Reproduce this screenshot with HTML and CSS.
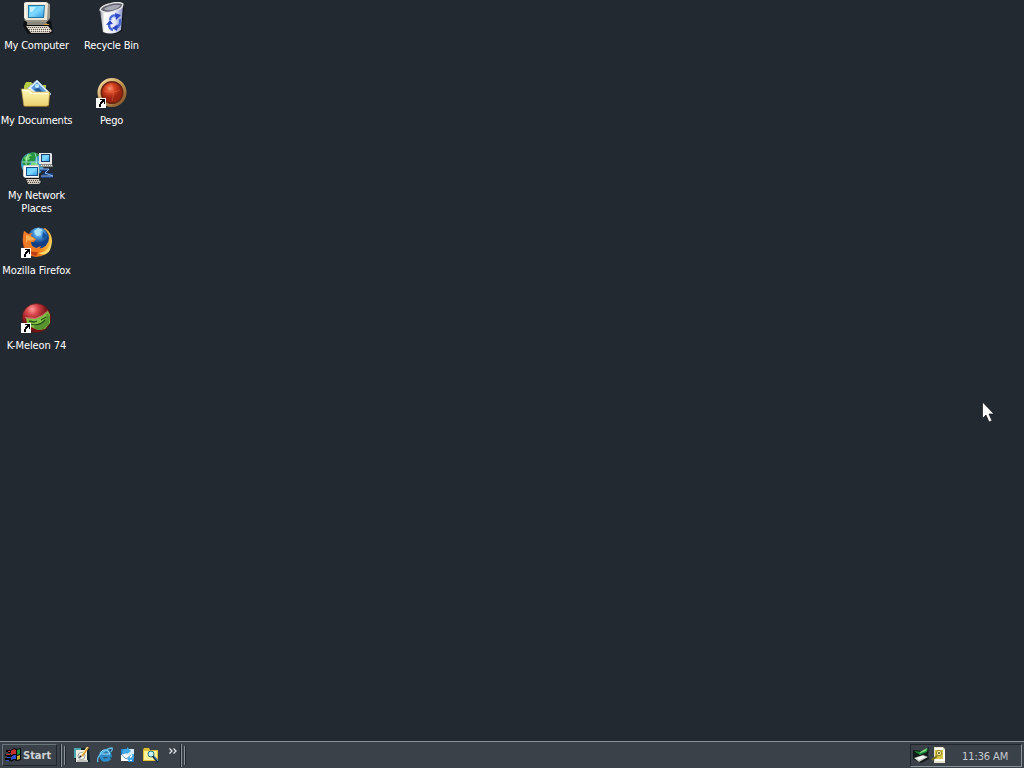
FILE: index.html
```
<!DOCTYPE html>
<html lang="en">
<head>
    <meta charset="UTF-8">
    <meta name="viewport" content="width=device-width, initial-scale=1.0">
    <title>Desktop</title>
    <link rel="stylesheet" href="styles.css">
</head>
<body>
    <svg class="defs" width="0" height="0">
        <defs>
            <linearGradient id="screen" x2="1" y2="1"><stop stop-color="#58d0fc"/><stop offset=".5" stop-color="#7fd8ff"/><stop offset="1" stop-color="#329ce8"/></linearGradient>
            <linearGradient id="bin"><stop stop-color="#9293a4"/><stop offset=".2" stop-color="#fff"/><stop offset=".65" stop-color="#e4e8fa"/><stop offset="1" stop-color="#8d95c8"/></linearGradient>
            <linearGradient id="folder" x2="0" y2="1"><stop stop-color="#fffab9"/><stop offset="1" stop-color="#ecd070"/></linearGradient>
            <radialGradient id="redball" cx=".4" cy=".3"><stop stop-color="#f79a75"/><stop offset=".4" stop-color="#dc4926"/><stop offset="1" stop-color="#9c2410"/></radialGradient>
            <linearGradient id="ring" x2="1" y2="1"><stop stop-color="#f7dfa6"/><stop offset=".5" stop-color="#c79a58"/><stop offset="1" stop-color="#7b4a20"/></linearGradient>
            <radialGradient id="globe" cx=".5" cy=".25"><stop stop-color="#b5e6ff"/><stop offset=".45" stop-color="#4b9bdc"/><stop offset="1" stop-color="#123f86"/></radialGradient>
            <linearGradient id="fox" x2="1" y2="0"><stop stop-color="#d9501a"/><stop offset=".55" stop-color="#ef7a16"/><stop offset="1" stop-color="#ffc84a"/></linearGradient>
            <radialGradient id="cap" cx=".35" cy=".2"><stop stop-color="#ff9c98"/><stop offset=".4" stop-color="#d8454a"/><stop offset="1" stop-color="#751217"/></radialGradient>
            <g id="shortcut">
                <path fill="#fff" d="M0 21h10v10H0z"/>
                <path fill="#000" d="M4 22h5v5H8v-2H7v1H6v1H5v3H3v-3h1v-2h1v-1h1v-1H4z"/>
            </g>
        </defs>
    </svg>

    <main class="desktop">
        <div class="column">
            <div class="item">
                <svg class="icon" viewBox="0 0 32 32">
                    <path fill="#0e1014" d="M3 19h27l2 12-4 1H7L2 24z"/>
                    <path fill="#9b968a" d="M24 0l5 2v14l-3 4H6l-3-2z"/>
                    <path fill="#ebe6d8" d="M3 1l2-1h20l2 1-1 17H5l-2-2z"/>
                    <path fill="#fffdf3" d="M4 1h21v1H5v15H4z"/>
                    <path fill="#24749d" d="M7 3h17l-1 13H7z"/>
                    <path fill="url(#screen)" d="M8 4h15l-1 11H8z"/>
                    <path fill="#c2effc" d="M9 5h6l-4 5H9z"/>
                    <path fill="#8b867b" d="M6 20h19l2 3H6z"/>
                    <path fill="#d8cfc3" d="M5 24h22l4 5-3 2H10z"/>
                    <path stroke="#5c534f" stroke-dasharray="1 1" d="M7 25.5h20M8 27.5h21M10 29.5h19"/>
                    <path stroke="#f6efe4" stroke-dasharray="1 1" d="M7 26.5h21M9 28.5h20"/>
                    <path fill="#cf9b32" d="M23 22h5v1h-5z"/>
                </svg>
                <span class="label">My Computer</span>
            </div>
            <div class="item">
                <svg class="icon" viewBox="0 0 32 32">
                    <path fill="#b7cc43" d="M3 9l2-4h5l3 3h12v7H3z"/>
                    <path fill="#eff8ff" stroke="#9dbbd5" d="M6 12L16 3l14 14-7 7z"/>
                    <path fill="#5c9cdd" d="M10 11l6-6 9 9-5 6z"/>
                    <path fill="#24599f" d="M13 12l5-1 4 4-3 3z"/>
                    <circle cx="16" cy="9" r="2" fill="#c3ecff"/>
                    <path fill="#56491d" d="M28 15h1l-1 15H4v-1h23z"/>
                    <path fill="url(#folder)" stroke="#d2b255" stroke-width=".7" d="M.5 12h8l3 3h17l-1 13-2 1H3z"/>
                    <path fill="#fffde2" d="M1 13h7l3 3h16v1H10l-3-3H1z"/>
                </svg>
                <span class="label">My Documents</span>
            </div>
            <div class="item">
                <svg class="icon" viewBox="0 0 32 32">
                    <circle cx="11.5" cy="12" r="11.5" fill="#3f9fc6"/>
                    <path fill="#27953e" d="M2 6l5-4 6-2 6 3-4 2-2 5-3-1-2 4-4 1-3-3z"/>
                    <path fill="#7bd873" d="M3 6l5-4 3 1-3 2 1 2-4 2zM11 10l5 1 2 3H9z"/>
                    <path fill="none" stroke="#b3ebd7" stroke-width=".8" d="M7 2q-4 9 0 18M1 10h18M14 1q3 6 1 12"/>
                    <path fill="#e3e5e7" d="M18 1h12l1 1v10H18z"/>
                    <path fill="#203c6a" d="M20 2h9v8h-9z"/>
                    <path fill="url(#screen)" d="M21 3h7v6h-7z"/>
                    <path fill="#8c8a84" d="M20 12h11l1 3H19z"/>
                    <path stroke="#e7e2d9" stroke-dasharray="1 1" d="M20 13.5h11"/>
                    <path fill="#d4d1c9" d="M2 14l2-1h14v13H4l-2-2z"/>
                    <path fill="#fff" d="M3 14h14v11H3z"/>
                    <path fill="#174f86" d="M5 15h12v9H5z"/>
                    <path fill="url(#screen)" d="M6 16h10v7H6z"/>
                    <path fill="#0e1014" d="M4 26h14l3 5-3 1H6z"/>
                    <path fill="#cfc7bc" d="M5 27h13l2 3-2 2H7z"/>
                    <path stroke="#504944" stroke-dasharray="1 1" d="M6 28.5h13M7 30.5h12"/>
                    <path fill="none" stroke="#18407f" stroke-width="2" d="M19 18h8l-4 4h9M20 25h12"/>
                    <path fill="none" stroke="#8fb8f5" d="M19 17h9l-4 4 8 3H20"/>
                </svg>
                <span class="label">My Network Places</span>
            </div>
            <div class="item">
                <svg class="icon" viewBox="0 0 32 32">
                    <path fill="url(#fox)" d="M24 1q7 5 7 13-1 15-16 16Q3 29 2 17 1 10 3 4l6 4z"/>
                    <circle cx="17.5" cy="11" r="10.5" fill="url(#globe)"/>
                    <path fill="#a9e1f6" d="M13 4l4-3 5 2-3 2 1 3-4 1-2-2z"/>
                    <path fill="#1758a0" d="M22 5l4 3-1 5-4-3z"/>
                    <path fill="#ef7b25" d="M3 4l4 3 4-1-1 3 5 3-2 3h-3l1 4 4 2 5-2-2 4-7 2-7-4-2-7z"/>
                    <path fill="#ffad55" d="M5 8l4 1 5 3-4 2-3-1-2 3z"/>
                    <path fill="#ffda6b" d="M27 4q5 7 2 14-4 8-12 8 8 4 12-3 4-11-2-19z"/>
                    <path fill="#b93c15" d="M8 23q4 3 9 2l-2 4q-5-1-7-6z"/>
                    <use href="#shortcut"/>
                </svg>
                <span class="label wide">Mozilla Firefox</span>
            </div>
            <div class="item">
                <svg class="icon" viewBox="0 0 32 32">
                    <circle cx="15.5" cy="16" r="14.5" fill="url(#cap)" stroke="#461b16" stroke-width=".7"/>
                    <path fill="#80bf43" d="M5 16l9 1 7-3 6-5 2 4v8l-5 6-7 1-7-3-4-4z"/>
                    <path fill="#58942f" d="M26 11l3 4-1 7-5 5-6 1-5-3 8-3 4-4z"/>
                    <path fill="none" stroke="#254d18" stroke-width="1.3" d="M8 19l5 1 3-1M20 18l5-3M10 22q8 3 14-4"/>
                    <path fill="none" stroke="#ee969a" stroke-width=".6" d="M4 15.500l10 1 7-3 6-5"/>
                    <use href="#shortcut"/>
                </svg>
                <span class="label wide">K-Meleon 74</span>
            </div>
        </div>
        <div class="column">
            <div class="item">
                <svg class="icon" viewBox="0 0 32 32">
                    <path fill="#101217" d="M25 7l3-2-2 24-9 4z"/>
                    <path fill="url(#bin)" d="M4 8l23-5-2 25q-8 6-18 2z"/>
                    <path fill="#62646f" stroke="#e8e8e9" stroke-width="1.3" d="M4 8q1-4 9-6 10-3 14 0 0 5-9 7-10 3-14-1z"/>
                    <path fill="#a5a8b4" d="M8 7q3-3 10-4h7q-3 4-9 5-6 1-8-1z"/>
                    <path fill="none" stroke="#4868d4" stroke-width="2.5" d="M14 18q1-6 7-4M24 17q1 7-4 9M17 28q-4-1-4-6"/>
                    <path fill="#2c46c8" d="M19 11l6 2-5 5zM22 22l-1 7-5-3zM10 23l4-5 3 4z"/>
                    <path fill="none" stroke="#a3b8f5" d="M15 17q2-3 4-2M22 18q1 3-1 5"/>
                </svg>
                <span class="label">Recycle Bin</span>
            </div>
            <div class="item">
                <svg class="icon" viewBox="0 0 32 32">
                    <circle cx="16" cy="15.5" r="13" fill="#6b2411" stroke="url(#ring)" stroke-width="3"/>
                    <circle cx="16" cy="15.5" r="10" fill="url(#redball)"/>
                    <path fill="none" stroke="#f48660" stroke-opacity=".35" d="M8 14q8 3 16-1M15 7q4 8 1 17"/>
                    <use href="#shortcut"/>
                </svg>
                <span class="label">Pego</span>
            </div>
        </div>

        <svg class="cursor" viewBox="0 0 13 21">
            <path fill="#fff" stroke="#101419" stroke-width=".7" d="M.5 0v16.5L4 13l3 7 3-1.300L7 12h5z"/>
        </svg>
    </main>

    <footer class="taskbar">
        <div class="start">
            <svg class="flag" viewBox="0 0 17 16">
                <path fill="#050608" d="M6 3l3-2 3 1 4-1v12l-4 1-3-1-3 2zM1 3h2v2H1zM3 3h3v3H3zM0 7h2v2H0zM2 7h4v3H2zM0 11h2v2H0zM2 11h4v3H2z"/>
                <path fill="#c4302d" d="M6 4l3-2 2 1v4L9 7 6 8zM3 4h2v1H3zM1 7h4v1H1z"/>
                <path fill="#18933e" d="M12 3l3-1v5l-3 1z"/>
                <path fill="#2f4fd0" d="M6 10l3-2h2v4L9 12l-3 1zM2 10h3v1H2zM1 13h3v1H1z"/>
                <path fill="#c5ae35" d="M12 9l3-1v4l-3 1z"/>
            </svg>
            <span>Start</span>
        </div>
        <i class="divider"></i>
        <i class="grip"></i>
        <div class="quick">
            <svg viewBox="0 0 16 16">
                <path fill="#11242f" d="M1 1h14l1 14H1z"/>
                <path fill="#4da7b2" d="M0 1h7v2H2v8H0z"/>
                <path fill="#f1eee2" d="M2 3h11v12H2z"/>
                <path fill="#bfc3bb" d="M3 13h11v2H3z"/>
                <circle cx="7.5" cy="9" r="3.5" fill="#fff" stroke="#929f9c"/>
                <path stroke="#d89b31" stroke-width="2.5" d="M8 9l6-9"/>
                <path stroke="#fff2b2" d="M7.5 8l6-8"/>
                <path fill="#222" d="M6 8l2 2-3 1z"/>
            </svg>
            <svg viewBox="0 0 16 16">
                <path fill="none" stroke="#2c8dcb" stroke-width="3.4" d="M4 8.5h9Q12 3 8 4 3 5 4 9q1 5 5 4 2 0 4-2"/>
                <path fill="none" stroke="#a5e5ff" d="M3 8q1-5 5-5 4 0 5 4H5"/>
                <path fill="none" stroke="#62bdec" stroke-width="1.3" d="M1 15q-2-4 4-9 6-5 10-5 1 1-1 4"/>
            </svg>
            <svg viewBox="0 0 16 16">
                <path fill="#287fc5" d="M1 2h6v6H1zM8 3h6v12H8z"/>
                <path fill="#d9edfa" d="M2 7l5-1 2-4h5v6l-2 5-8 1-2-4z"/>
                <path fill="#fff" d="M1 8h11v6H1z"/>
                <path fill="none" stroke="#6a9abd" d="M2 8l4 4 5-4"/>
                <path fill="#3da9e9" d="M2 5q1-4 5-3V0l4 4-4 3V5L4 7zM12 7q1 3-2 4v-2l-3 3 3 3v-2q5 0 4-6z"/>
            </svg>
            <svg viewBox="0 0 16 16">
                <path fill="#dfbf32" d="M0 3l1-2h5l1 2h8v11H0z"/>
                <path fill="#fff298" d="M1 4h13v9H1z"/>
                <circle cx="8" cy="7" r="3" fill="#c6f3fa" stroke="#237383"/>
                <path stroke="#172c43" stroke-width="2.5" d="M10 9l5 6"/>
                <path stroke="#5da6d5" d="M11 9l4 5"/>
            </svg>
            <svg class="more" viewBox="0 0 9 7">
                <path fill="none" stroke="#e1e4e7" stroke-width="1.3" d="M.5.5L3 3 .5 5.500M4.500.5L7 3 4.500 5.500"/>
            </svg>
        </div>
        <i class="divider"></i>
        <i class="grip"></i>
        <div class="tray">
            <svg viewBox="0 0 16 16">
                <path fill="#111a17" d="M0 3l9 1 7-4-1 8 1 4-8 4-8-4z"/>
                <path fill="#1f8b3a" d="M1 4l7 1 7-4-1 4-7 3z"/>
                <path fill="#7eda7d" d="M7 5l7-4-1 3-6 2z"/>
                <path fill="#c8cbc6" d="M1 11l9-3 5 2-9 5z"/>
                <path fill="#fff" d="M3 11l7-2 3 1-7 3z"/>
            </svg>
            <svg viewBox="0 0 16 16">
                <path fill="#e5e2c6" d="M3 0h9l2 2v14H3z"/>
                <path fill="#fff" d="M4 1h8v2h2v11H4z"/>
                <path fill="#d5c644" d="M4 3h8v9H4z"/>
                <circle cx="8" cy="6" r="2.7" fill="#f7ed9c" stroke="#93831b"/>
                <circle cx="8" cy="6" r="1" fill="#534b20"/>
                <path stroke="#81731d" stroke-width="2" d="M6 9l-5 4"/>
            </svg>
            <span class="clock">11:36 AM</span>
        </div>
    </footer>
</body>
</html>
```
FILE: styles.css
```
* {
    box-sizing: border-box;
}
body {
    margin: 0;
    height: 768px;
    overflow: hidden;
    display: flex;
    flex-direction: column;
    background: #232931;
    color: #fff;
    font: 11px/13px Tahoma, "DejaVu Sans Condensed", sans-serif;
    cursor: default;
}
.defs {
    position: absolute;
}
.desktop {
    height: 741px;
    display: flex;
    margin-left: -1px;
}
.column {
    width: 75px;
}
.item {
    height: 75px;
    padding: 2px 0 0;
    display: flex;
    flex-direction: column;
    align-items: center;
}
.icon {
    width: 32px;
    height: 32px;
    margin-left: 1px;
    flex-shrink: 0;
}
.label {
    margin-top: 5px;
    width: 73px;
    text-align: center;
    letter-spacing: -0.2px;
}
.label.wide {
    letter-spacing: -0.1px;
}
.cursor {
    position: absolute;
    left: 982px;
    top: 402px;
    width: 13px;
    height: 21px;
}
.taskbar {
    height: 27px;
    display: flex;
    align-items: center;
    padding: 0 2px;
    background: #3a4149;
    border-top: 1px solid #89949b;
}
.start {
    width: 55px;
    height: 22px;
    display: flex;
    align-items: center;
    padding-left: 2px;
    gap: 1px;
    border: 1px solid;
    border-color: #69737a #20262c #20262c #69737a;
    color: #ced3d7;
    font-weight: bold;
}
.flag {
    width: 17px;
    height: 16px;
    flex-shrink: 0;
}
.divider {
    width: 2px;
    height: 23px;
    margin-left: 3px;
    border-left: 1px solid #20262c;
    border-right: 1px solid #87929a;
}
.grip {
    width: 2px;
    height: 19px;
    margin-left: 2px;
    border-left: 1px solid #87929a;
    border-right: 1px solid #20262c;
}
.quick {
    width: 111px;
    display: flex;
    align-items: center;
    gap: 7px;
    padding-left: 8px;
}
.quick svg,
.tray svg {
    width: 16px;
    height: 16px;
    flex-shrink: 0;
}
.quick .more {
    width: 9px;
    height: 7px;
    margin: -7px 0 0 3px;
}
.tray {
    width: 112px;
    height: 23px;
    margin-left: auto;
    display: flex;
    align-items: center;
    gap: 2px;
    padding-left: 2px;
    border: 1px solid;
    border-color: #20262c #87929a #87929a #20262c;
}
.clock {
    margin: 2px 0 0 13px;
    color: #c6cbd0;
    white-space: nowrap;
    letter-spacing: -0.1px;
}
```
